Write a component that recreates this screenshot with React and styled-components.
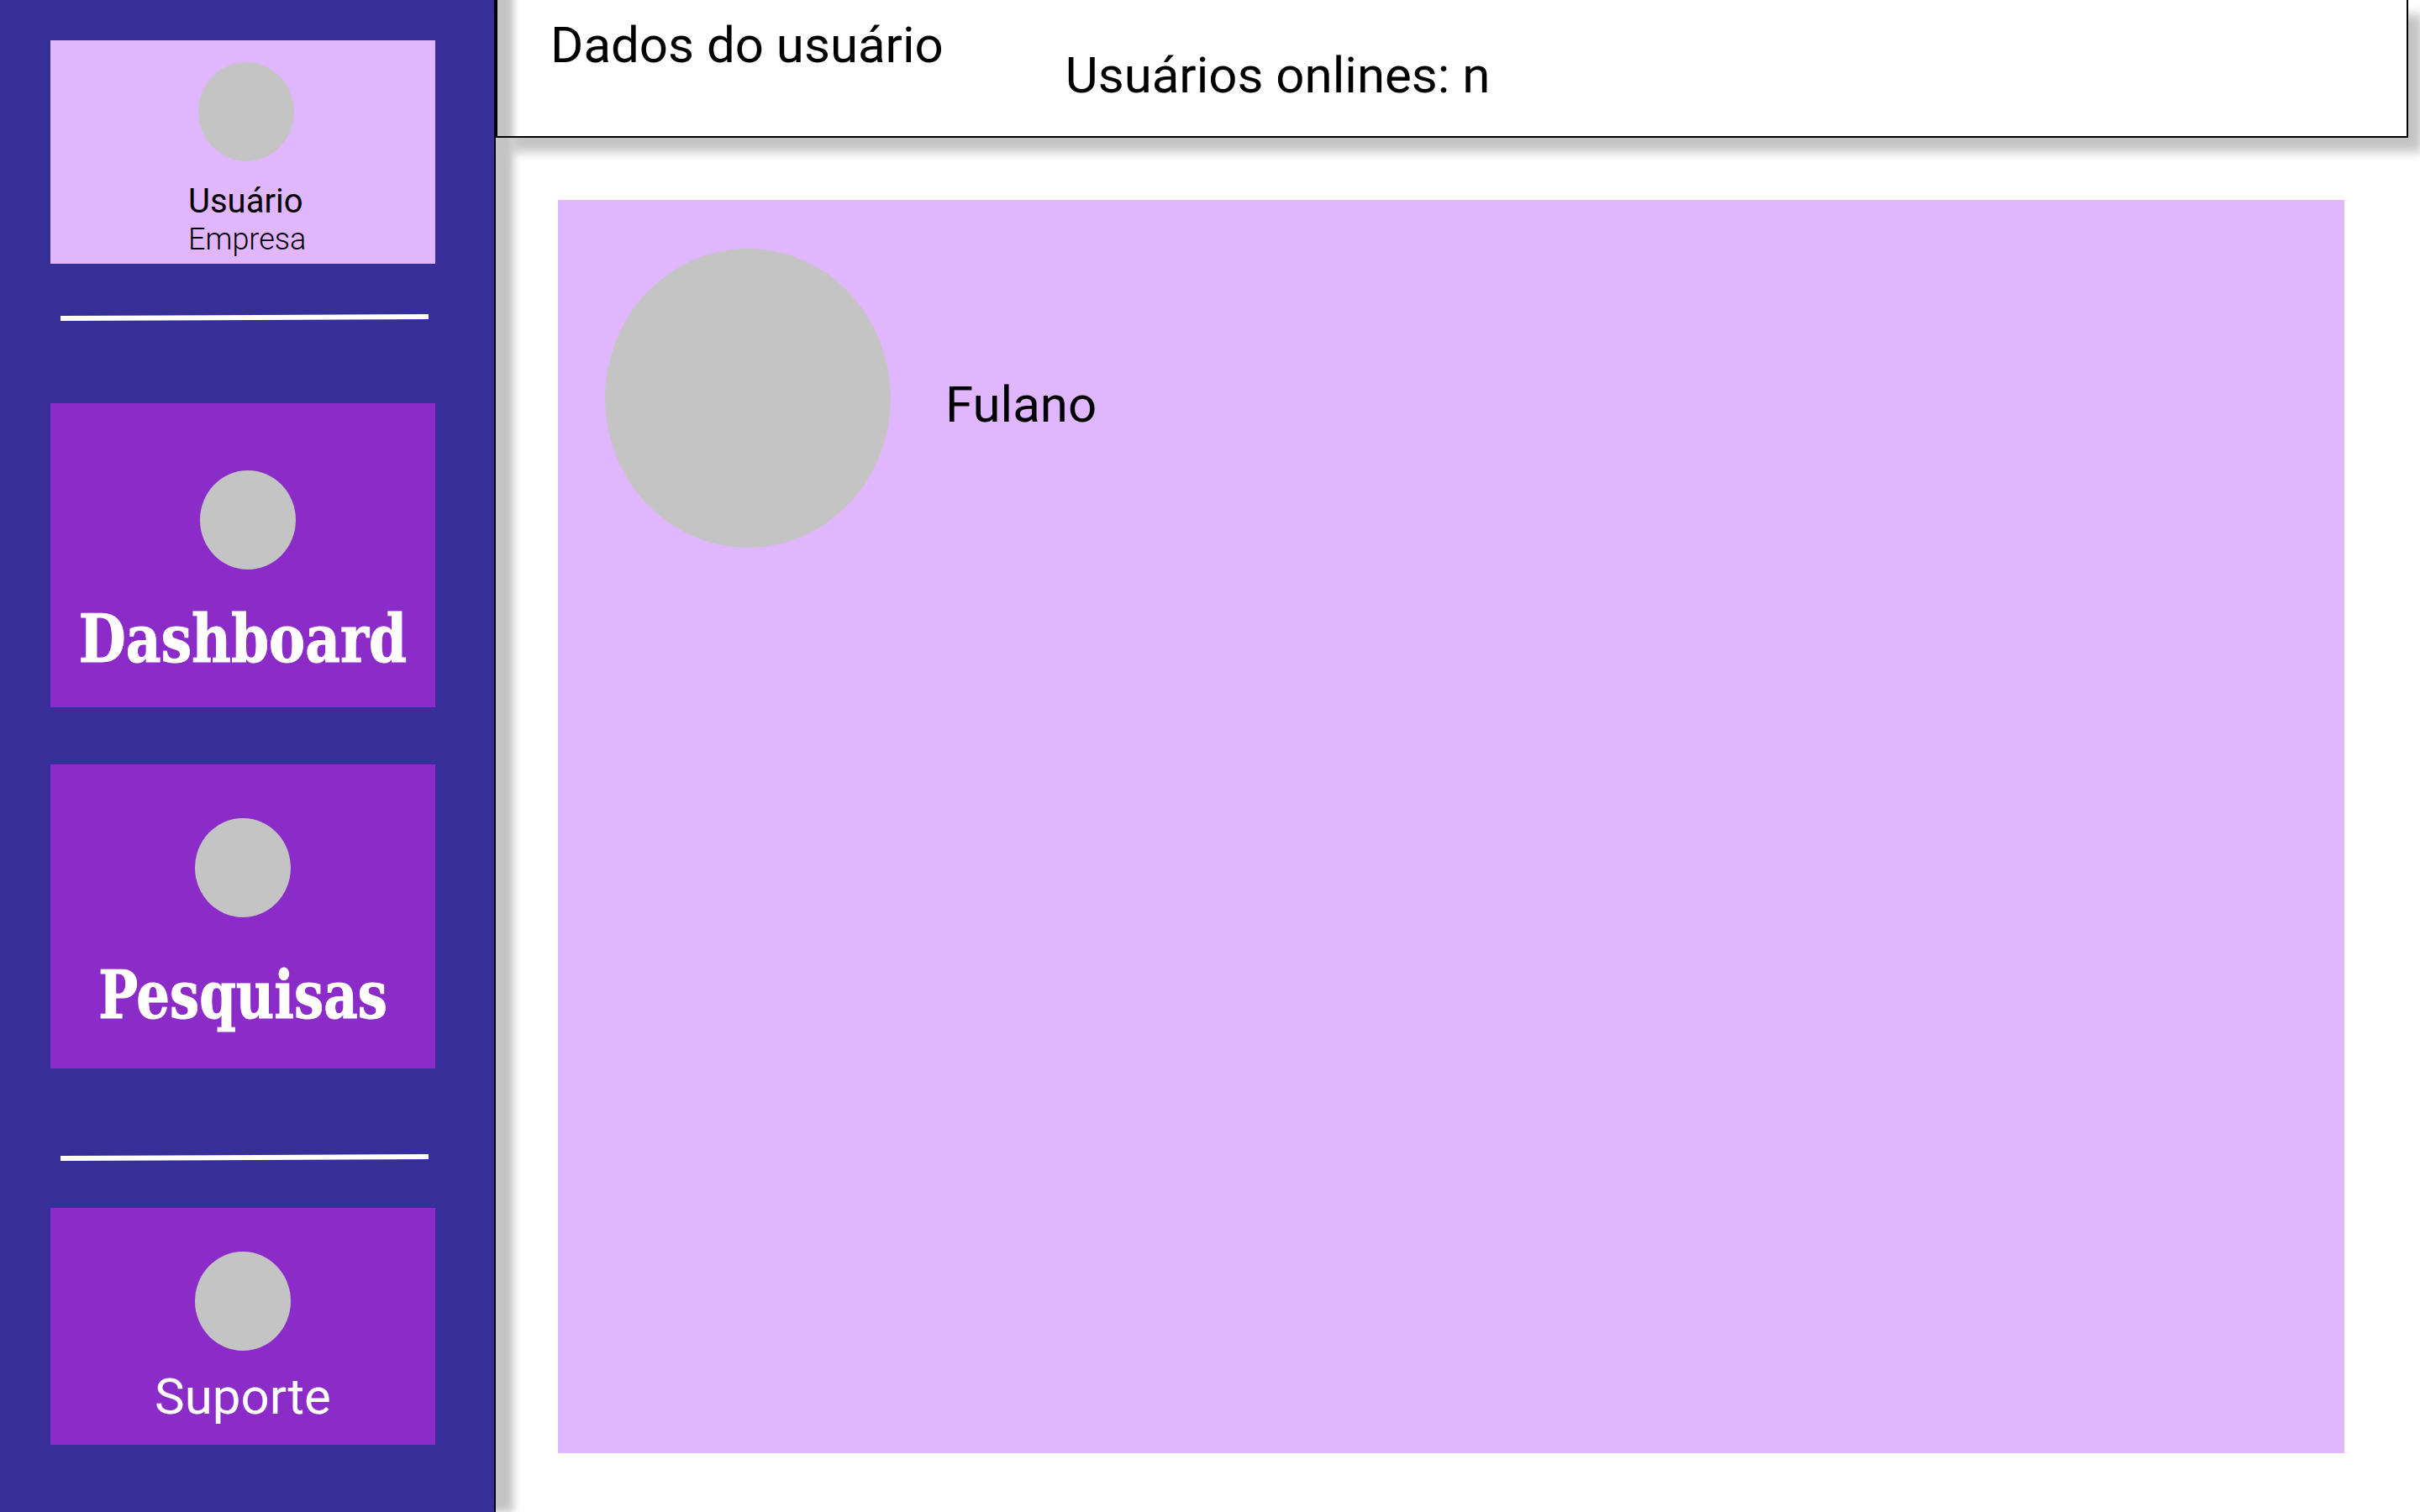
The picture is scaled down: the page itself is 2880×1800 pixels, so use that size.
import React from 'react'
import styled, { createGlobalStyle } from 'styled-components'

const GlobalStyle = createGlobalStyle`
  html, body {
    margin: 0;
    padding: 0;
    height: 100%;
    background: #fff;
    overflow: hidden;
    font-family: Roboto, "Liberation Sans", sans-serif;
  }
  * {
    box-sizing: border-box;
  }
`

const Page = styled.div`
  display: flex;
  width: 100%;
  height: 100vh;
`

const Sidebar = styled.aside`
  position: relative;
  z-index: 2;
  flex: 0 0 590px;
  padding: 48px 0 0 60px;
  background: #352f97;
  border-right: 2px solid #000;
  box-shadow: 21px 0 9px #c4c4c4;
`

const ProfileCard = styled.div`
  width: 458px;
  height: 266px;
  padding-top: 26px;
  background: #e0b6fe;
`

const Dot = styled.div`
  width: 114px;
  height: 118px;
  margin-left: ${p => p.$x}px;
  border-radius: 50%;
  background: #c4c4c4;
`

const ProfileText = styled.div`
  margin: 24px 0 0 164px;
  color: #000;
`

const UserName = styled.div`
  font-size: 40px;
  line-height: 47px;
`

const Company = styled.div`
  margin-top: 1px;
  font-size: 36px;
  font-weight: 300;
  line-height: 42px;
`

const Divider = styled.div`
  width: 438px;
  height: 6px;
  margin: ${p => p.$top}px 0 ${p => p.$bottom}px 12px;
  background: #fff;
  transform: rotate(-0.26deg);
`

const NavCard = styled.div`
  width: 458px;
  height: ${p => p.$height}px;
  margin-bottom: ${p => p.$gap || 0}px;
  padding-top: ${p => p.$top}px;
  background: #8b2cc9;
`

const NavTitle = styled.div`
  margin-top: ${p => p.$top}px;
  color: #fff;
  font-family: "DejaVu Serif Condensed", "DejaVu Serif", serif;
  font-size: 78px;
  font-weight: 700;
  line-height: 92px;
  text-align: center;
  -webkit-text-stroke: 1px #fff;
  transform: scaleX(${p => p.$squeeze});
`

const NavLabel = styled.div`
  margin-top: 20px;
  color: #fff;
  font-size: 60px;
  line-height: 70px;
  text-align: center;
`

const Main = styled.main`
  flex: 1;
  min-width: 0;
`

const Header = styled.header`
  position: relative;
  z-index: 3;
  display: flex;
  align-items: flex-start;
  gap: 145px;
  width: 2276px;
  height: 164px;
  padding: 19px 0 0 63px;
  background: #fff;
  border: 2px solid #000;
  border-top: 0;
  box-shadow: 17px 17px 12px #c4c4c4, inset 39px 0 9px -20px #c4c4c4;
`

const HeaderText = styled.div`
  margin-top: ${p => p.$top || 0}px;
  color: #000;
  font-size: 60px;
  line-height: 70px;
`

const Panel = styled.section`
  display: flex;
  align-items: flex-start;
  gap: 65px;
  width: 2126px;
  height: 1492px;
  margin: 74px 0 0 74px;
  padding: 58px 0 0 56px;
  background: #e0b6fe;
`

const Avatar = styled.div`
  flex: 0 0 340px;
  height: 356px;
  border-radius: 50%;
  background: #c4c4c4;
`

const PersonName = styled.div`
  margin-top: 151px;
  color: #000;
  font-size: 60px;
  line-height: 70px;
`

const App = () => {
  return (
    <Page>
      <GlobalStyle />
      <Sidebar>
        <ProfileCard>
          <Dot $x={176} />
          <ProfileText>
            <UserName>Usuário</UserName>
            <Company>Empresa</Company>
          </ProfileText>
        </ProfileCard>
        <Divider $top={61} $bottom={99} />
        <NavCard $height={362} $top={80} $gap={68}>
          <Dot $x={178} />
          <NavTitle $top={37} $squeeze={0.92}>Dashboard</NavTitle>
        </NavCard>
        <NavCard $height={362} $top={64}>
          <Dot $x={172} />
          <NavTitle $top={47} $squeeze={0.89}>Pesquisas</NavTitle>
        </NavCard>
        <Divider $top={103} $bottom={57} />
        <NavCard $height={282} $top={52}>
          <Dot $x={172} />
          <NavLabel>Suporte</NavLabel>
        </NavCard>
      </Sidebar>
      <Main>
        <Header>
          <HeaderText>Dados do usuário</HeaderText>
          <HeaderText $top={36}>Usuários onlines: n</HeaderText>
        </Header>
        <Panel>
          <Avatar />
          <PersonName>Fulano</PersonName>
        </Panel>
      </Main>
    </Page>
  )
}

export default App
